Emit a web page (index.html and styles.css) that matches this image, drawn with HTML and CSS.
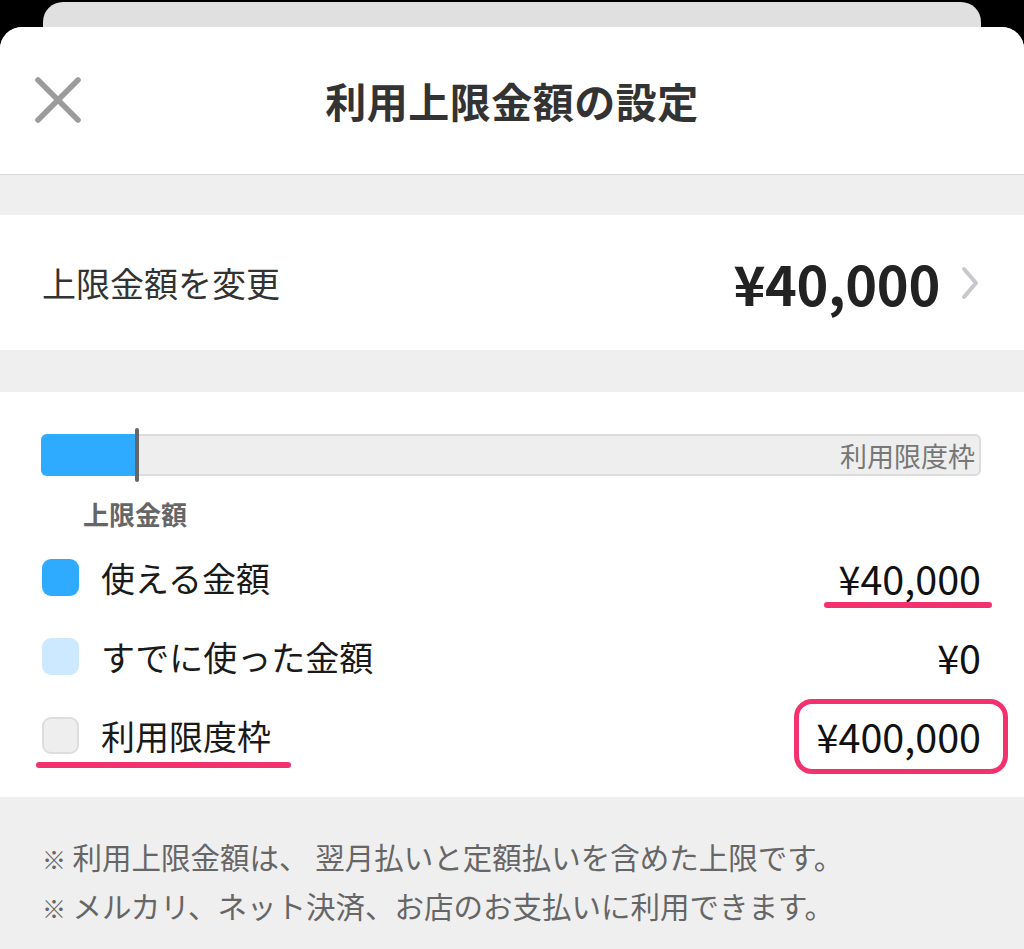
FILE: index.html
```html
<!DOCTYPE html>
<html lang="ja">
<head>
<meta charset="utf-8">
<title>利用上限金額の設定</title>
<link rel="stylesheet" href="styles.css">
</head>
<body>
<div class="backcard"></div>
<div class="sheet">
  <header class="header">
    <button class="close" aria-label="閉じる">
      <svg width="50" height="50" viewBox="0 0 50 50"><path d="M5 5 L45 45 M45 5 L5 45" stroke="#9b9b9b" stroke-width="5.5" stroke-linecap="round" fill="none"/></svg>
    </button>
    <h1 class="title">利用上限金額の設定</h1>
    <span></span>
  </header>
  <div class="gap"></div>
  <section class="limit-row">
    <span class="limit-label">上限金額を変更</span>
    <span class="limit-value">¥40,000</span>
    <svg class="chev" width="20" height="34" viewBox="0 0 20 34"><path d="M4 3 L16 17 L4 31" stroke="#c8c8cc" stroke-width="4" stroke-linecap="round" stroke-linejoin="round" fill="none"/></svg>
  </section>
  <div class="gap gap2"></div>
  <section class="usage">
    <div class="bar">
      <div class="bar-fill" style="width:10%"></div>
      <div class="bar-marker" style="left:10%"></div>
      <span class="bar-label">利用限度枠</span>
    </div>
    <div class="caption">上限金額</div>
    <ul class="legend">
      <li class="legend-row">
        <span class="swatch swatch-blue"></span>
        <span class="legend-text">使える金額</span>
        <span class="amount mark-under-amount">¥40,000</span>
      </li>
      <li class="legend-row">
        <span class="swatch swatch-light"></span>
        <span class="legend-text">すでに使った金額</span>
        <span class="amount">¥0</span>
      </li>
      <li class="legend-row">
        <span class="swatch swatch-gray"></span>
        <span class="legend-text mark-under-text">利用限度枠</span>
        <span class="amount mark-box">¥400,000</span>
      </li>
    </ul>
  </section>
  <footer class="notes">
    <p><span class="kome">※</span> 利用上限金額は、 翌月払いと定額払いを含めた上限です。</p>
    <p><span class="kome">※</span> メルカリ、ネット決済、お店のお支払いに利用できます。</p>
  </footer>
</div>
</body>
</html>
```
FILE: styles.css
```css
* { box-sizing: border-box; }
html, body { margin: 0; padding: 0; }
body {
  background: #000;
  font-family: "Noto Sans CJK JP", "Noto Sans", sans-serif;
  width: 1024px;
  height: 949px;
  overflow: hidden;
  padding-top: 2px;
}
.backcard {
  height: 25px;
  margin: 0 43px;
  background: #e0e0e0;
  border-radius: 20px 20px 0 0;
}
.sheet {
  background: #efefef;
  border-radius: 22px 22px 0 0;
  overflow: hidden;
}
.header {
  height: 148px;
  background: #fff;
  border-bottom: 1px solid #d9d9d9;
  display: grid;
  grid-template-columns: 1fr auto 1fr;
  align-items: center;
  padding-bottom: 2px;
}
.close {
  border: 0;
  background: none;
  padding: 0;
  margin-left: 33px;
  width: 50px;
  height: 50px;
  display: flex;
}
.title {
  margin: 0;
  font-size: 41px;
  font-weight: 700;
  color: #333;
  letter-spacing: 0.5px;
}
.gap { height: 40px; }
.gap2 { height: 42px; }
.limit-row {
  height: 135px;
  background: #fff;
  display: flex;
  align-items: center;
  padding: 0 44px 0 42px;
}
.limit-label {
  font-size: 34px;
  color: #333;
  flex: 1;
}
.limit-value {
  font-size: 54px;
  font-weight: 700;
  color: #222;
  letter-spacing: -0.3px;
}
.chev { margin-left: 20px; }
.usage {
  background: #fff;
  height: 405px;
  padding: 42px 43px 0 41px;
}
.bar {
  position: relative;
  height: 42px;
  background: #eeeeee;
  border: 2px solid #dcdcdc;
  border-radius: 6px;
  display: flex;
  align-items: center;
  justify-content: flex-end;
  padding-right: 4px;
}
.bar-fill {
  position: absolute;
  left: -2px;
  top: -2px;
  bottom: -2px;
  background: #2eaaff;
  border-radius: 6px 0 0 6px;
}
.bar-marker {
  position: absolute;
  top: -8px;
  bottom: -8px;
  width: 4px;
  margin-left: -2px;
  background: #666;
  border-radius: 2px;
}
.bar-label {
  font-size: 27px;
  color: #777;
  line-height: 1;
}
.caption {
  margin: 21px 0 0 42px;
  font-size: 26px;
  font-weight: 700;
  color: #666;
  line-height: 34px;
}
.legend {
  list-style: none;
  margin: 7px 0 0;
  padding: 0;
}
.legend-row {
  height: 79px;
  display: flex;
  align-items: center;
}
.swatch {
  width: 37px;
  height: 37px;
  border-radius: 9px;
  margin-left: 1px;
  margin-right: 22px;
}
.swatch-blue { background: #2eaaff; }
.swatch-light { background: #cce9ff; }
.swatch-gray { background: #eeeeee; border: 2px solid #dddddd; }
.legend-text {
  font-size: 34px;
  color: #1a1a1a;
  flex: 1;
  position: relative;
}
.legend-text.mark-under-text { flex: 0 0 auto; margin-right: auto; }
.amount {
  font-size: 39.5px;
  color: #111;
  position: relative;
  line-height: 44px;
}
.mark-under-amount::after {
  content: "";
  position: absolute;
  left: -14px;
  right: -11px;
  bottom: -8px;
  height: 6px;
  border-radius: 3px;
  background: #f2326e;
}
.mark-under-text::after {
  content: "";
  position: absolute;
  left: -65px;
  right: -20px;
  bottom: -8px;
  height: 6px;
  border-radius: 3px;
  background: #f2326e;
}
.mark-box::after {
  content: "";
  position: absolute;
  left: -23px;
  right: -27px;
  top: -15px;
  bottom: -16px;
  border: 5px solid #f2326e;
  border-radius: 18px;
}
.notes {
  height: 152px;
  padding: 36px 0 0 42px;
}
.notes p {
  margin: 0;
  font-size: 29.5px;
  line-height: 47px;
  color: #666;
  white-space: nowrap;
}
.kome { font-size: 24px; }
```
